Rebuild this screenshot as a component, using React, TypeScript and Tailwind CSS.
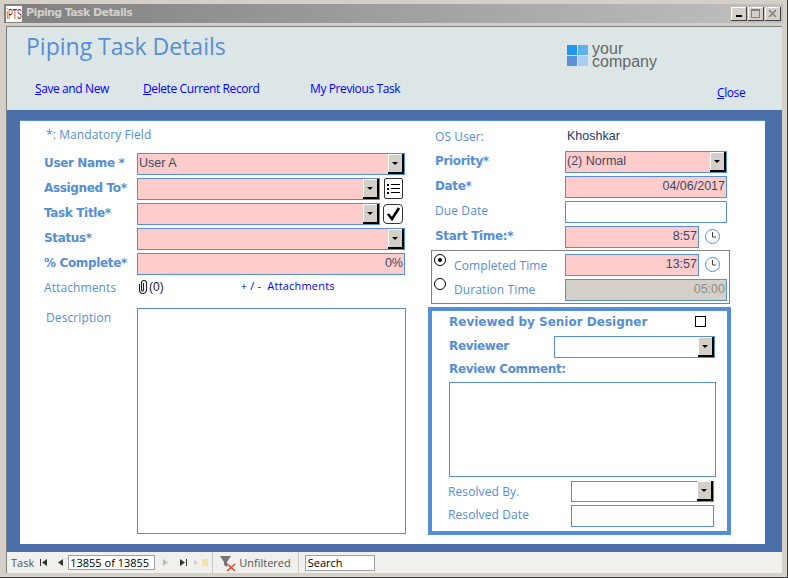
import React from 'react';

const bodyFont = { fontFamily: '"Open Sans", sans-serif' };

const ComboButton = () => (
  <span className="flex h-[20px] w-[16px] shrink-0 items-center justify-center self-end border-b-2 border-r-2 border-black bg-[#d4d0c8] shadow-[inset_1px_1px_0_#fff]">
    <span className="mt-[1px] h-0 w-0 border-x-[3px] border-t-[3px] border-x-transparent border-t-black" />
  </span>
);

const Box = ({ w, h = 22, bg = 'bg-white', combo, align = 'left', text, muted }: { w: number | string; h?: number; bg?: string; combo?: boolean; align?: string; text?: string; muted?: boolean }) => (
  <div
    className={`flex shrink-0 items-center justify-between border border-[#558ed5] ${bg}`}
    style={{ width: w, height: h }}
  >
    <span
      className={`flex-1 px-[1px] font-['Liberation_Sans',sans-serif] text-[12.5px] leading-none ${muted ? 'text-[#8c8c8c]' : 'text-[#3a4a63]'} ${align === 'right' ? 'text-right' : 'text-left'}`}
    >
      {text}
    </span>
    {combo && <ComboButton />}
  </div>
);

const Label = ({ children, bold, className = '' }: { children: React.ReactNode; bold?: boolean; className?: string }) => (
  <span className={`whitespace-nowrap text-[12px] leading-none text-[#558ed5] ${bold ? "font-['DejaVu_Sans',sans-serif] font-bold tracking-[-0.35px]" : "font-['Open_Sans',sans-serif] tracking-[0.1px]"} ${className}`}>
    {children}
  </span>
);

const Clock = () => (
  <svg width="17" height="17" viewBox="0 0 17 17" fill="none" stroke="#558ed5" className="ml-[5px] shrink-0">
    <circle cx="8.5" cy="8.5" r="7" />
    <path d="M8.5 4v5h3.5" stroke="#444" />
  </svg>
);

const Radio = ({ on, lift }: { on?: boolean; lift: string }) => (
  <span className={`${lift} flex h-[12px] w-[12px] shrink-0 items-center justify-center rounded-full border border-black bg-white`}>
    {on && <span className="h-[4px] w-[4px] rounded-full bg-black" />}
  </span>
);

const Row = ({ label, children }: { label: string; children: React.ReactNode }) => (
  <div className="flex h-[25px] items-center">
    <div className="w-[93px] pb-[6px] leading-none">
      <Label bold>{label}</Label>
    </div>
    {children}
  </div>
);

const RightRow = ({ label, bold, children }: { label: string; bold?: boolean; children: React.ReactNode }) => (
  <div className="flex h-[25px] items-center">
    <div className="w-[130px] pb-[6px] leading-none">
      <Label bold={bold}>{label}</Label>
    </div>
    {children}
  </div>
);

const NavArrow = ({ d, fill = '#333' }: { d: string; fill?: string }) => (
  <svg width="9" height="9" viewBox="0 0 9 9" className="block shrink-0">
    <path d={d} fill={fill} />
  </svg>
);

export default function App() {
  return (
    <div className="flex h-[578px] w-[788px] flex-col overflow-hidden border-b border-r border-[#404040] bg-[#d4d0c8] pt-[4px]" style={bodyFont}>
      {/* Title bar */}
      <div className="mx-[4px] flex h-[19px] shrink-0 items-center justify-between bg-gradient-to-r from-[#808080] to-[#c0c0c0] pl-[2px] pr-[2px]">
        <div className="flex items-center gap-[4px]">
          <div className="flex h-[16px] w-[16px] items-center justify-center overflow-hidden bg-white">
            <span className="scale-x-[0.5] whitespace-nowrap font-['Liberation_Sans',sans-serif] text-[14px] font-normal leading-none text-[#8b1a1a]">
              <span className="text-[#1d4fa8]">i</span>PTS
            </span>
          </div>
          <span className="font-['DejaVu_Sans',sans-serif] text-[11px] font-bold tracking-[-0.6px] text-[#d4d0c8]">Piping Task Details</span>
        </div>
        <div className="flex">
          {['min', 'max', 'close'].map((b) => (
            <span key={b} className="ml-[1px] flex h-[14px] w-[16px] items-center justify-center border-b border-r border-[#404040] bg-[#d4d0c8] shadow-[inset_1px_1px_0_#fff]">
              {b === 'min' && <span className="mt-[6px] h-[2px] w-[6px] bg-black" />}
              {b === 'max' && <span className="h-[9px] w-[9px] border border-t-2 border-[#808080]" />}
              {b === 'close' && (
                <svg width="9" height="9" viewBox="0 0 9 9" stroke="#808080" strokeWidth="1.6"><path d="M1 1l7 7M8 1l-7 7" /></svg>
              )}
            </span>
          ))}
        </div>
      </div>

      {/* Form frame */}
      <div className="mb-[4px] ml-[6px] mr-[5px] mt-[3px] flex min-h-0 flex-1 flex-col border-l border-t border-[#808080]">
        {/* Form header */}
        <div className="flex h-[85px] shrink-0 flex-col border-b-2 border-[#4a6fa9] bg-[#dde6e6]">
          <div className="flex h-[48px] shrink-0 items-start justify-between">
            <span className="ml-[19px] mt-[3px] text-[23px] leading-[33px] text-[#558ed5]">Piping Task Details</span>
            <div className="mr-[125px] mt-[15px] flex items-center gap-[4px]">
              <div className="grid h-[21px] w-[21px] grid-cols-2 gap-[1px]">
                <span className="bg-[#1e96f0]" />
                <span className="bg-[#5fb0f0]" />
                <span className="bg-[#5a8fdc]" />
                <span className="bg-[#a8cdf0]" />
              </div>
              <div className="font-['Liberation_Sans',sans-serif] text-[16px] font-normal leading-[13px] text-[#666]">
                your<br />company
              </div>
            </div>
          </div>
          <div className="mt-[8px] flex items-start text-[12px] leading-none tracking-[-0.4px] text-[#0000ff]">
            <span className="ml-[28px] w-[108px]"><u>S</u>ave and New</span>
            <span className="w-[167px]"><u>D</u>elete Current Record</span>
            <span className="w-[407px]">My Previous Task</span>
            <span className="mt-[4px]"><u>C</u>lose</span>
          </div>
        </div>

        {/* Detail section */}
        <div className="flex min-h-0 flex-1 bg-[#4a6fa9] pb-[8px] pl-[13px] pr-[17px] pt-[8px]">
          <div className="flex flex-1 border-t border-[#558ed5] bg-white">
            {/* Left column */}
            <div className="w-[408px] shrink-0 pl-[24px] pt-[8px]">
              <Label className="ml-[2px] block leading-[14px]">*: Mandatory Field</Label>
              <div className="mt-[10px]">
                <Row label="User Name *"><Box w={268} text="User A" combo bg="bg-[#ffcccc]" /></Row>
                <Row label="Assigned To*">
                  <Box w={243} combo bg="bg-[#ffcccc]" />
                  <span className="ml-[4px] flex h-[21px] w-[19px] flex-col items-center justify-center gap-[2px] rounded-[2px] border border-[#333]">
                    {[0, 1, 2].map((i) => (
                      <span key={i} className="flex items-center gap-[2px]">
                        <span className="h-[2px] w-[2px] bg-black" />
                        <span className="h-[1px] w-[9px] bg-black" />
                      </span>
                    ))}
                  </span>
                </Row>
                <Row label="Task Title*">
                  <Box w={243} combo bg="bg-[#ffcccc]" />
                  <span className="ml-[3px] flex h-[20px] w-[20px] items-center justify-center rounded-[4px] border border-[#333]">
                    <svg width="15" height="15" viewBox="0 0 15 15" fill="none" stroke="#000" strokeWidth="2.6"><path d="M2 8l4 5 7-11" /></svg>
                  </span>
                </Row>
                <Row label="Status*"><Box w={268} combo bg="bg-[#ffcccc]" /></Row>
                <Row label="% Complete*"><Box w={268} text="0%" align="right" bg="bg-[#ffcccc]" /></Row>
                <div className="flex h-[25px] items-center pb-[4px]">
                  <div className="w-[93px] pb-[2px] leading-none"><Label>Attachments</Label></div>
                  <svg width="12" height="15" viewBox="0 0 11 15" fill="none" stroke="#222" strokeWidth="1.1" className="shrink-0">
                    <path d="M2 5v6a3.5 3.5 0 0 0 7 0V4a2.5 2.5 0 0 0-5 0v7a1 1 0 0 0 2 0V4" />
                  </svg>
                  <span className="font-['Liberation_Sans',sans-serif] text-[12px] text-[#222]">(0)</span>
                  <span className="ml-[77px] text-[11px] tracking-[0.2px] text-[#0000ff]">+ / -&nbsp; Attachments</span>
                </div>
              </div>
              <div className="mt-[7px] flex">
                <div className="w-[93px] pl-[2px] leading-none"><Label>Description</Label></div>
                <div className="h-[226px] w-[269px] border border-[#558ed5]" />
              </div>
            </div>

            {/* Right column */}
            <div className="w-[303px] shrink-0 pl-[7px] pt-[3px]">
              <div className="flex h-[25px] items-center">
                <div className="w-[130px] pb-[4px] leading-none"><Label>OS User:</Label></div>
                <span className="ml-[2px] font-['Liberation_Sans',sans-serif] text-[12.5px] text-[#1f3864]">Khoshkar</span>
              </div>
              <RightRow label="Priority*" bold><Box w={162} text="(2) Normal" combo bg="bg-[#ffcccc]" /></RightRow>
              <RightRow label="Date*" bold><Box w={162} text="04/06/2017" align="right" bg="bg-[#ffcccc]" /></RightRow>
              <RightRow label="Due Date"><Box w={162} /></RightRow>
              <RightRow label="Start Time:*" bold>
                <Box w={134} text="8:57" align="right" bg="bg-[#ffcccc]" />
                <Clock />
              </RightRow>
              <div className="-ml-[4px] mt-[1px] h-[54px] w-[299px] border border-[#808080] pl-[2px] pt-[1px]">
                <div className="flex h-[25px] items-center">
                  <Radio on lift="mb-[10px]" />
                  <div className="ml-[8px] w-[111px] pb-[2px] leading-none"><Label>Completed Time</Label></div>
                  <Box w={134} text="13:57" align="right" bg="bg-[#ffcccc]" />
                  <Clock />
                </div>
                <div className="flex h-[25px] items-center">
                  <Radio lift="mb-[12px]" />
                  <div className="ml-[8px] w-[111px] pb-[4px] leading-none"><Label>Duration Time</Label></div>
                  <Box w={162} text="05:00" align="right" muted bg="bg-[#d4d0c8]" />
                </div>
              </div>

              {/* Review panel */}
              <div className="-ml-[7px] mt-[3px] h-[228px] w-[303px] border-4 border-[#558ed5] pl-[17px]">
                <div className="mb-[4px] flex h-[21px] items-center justify-between pr-[21px]">
                  <Label bold className="tracking-[0px]">Reviewed by Senior Designer</Label>
                  <span className="h-[11px] w-[11px] border border-black" />
                </div>
                <div className="flex h-[22px] items-center">
                  <div className="w-[105px] pb-[6px] leading-none"><Label bold>Reviewer</Label></div>
                  <Box w={161} combo />
                </div>
                <div className="flex h-[24px] items-center pb-[2px]"><Label bold>Review Comment:</Label></div>
                <div className="h-[95px] w-[267px] border border-[#558ed5]" />
                <div className="mt-[4px] flex h-[21px] items-center">
                  <div className="w-[122px] pb-[4px] leading-none"><Label className="-ml-[1px]">Resolved By.</Label></div>
                  <Box w={143} h={21} combo />
                </div>
                <div className="mt-[3px] flex h-[22px] items-center">
                  <div className="w-[122px] pb-[6px] leading-none"><Label className="-ml-[1px]">Resolved Date</Label></div>
                  <Box w={143} />
                </div>
              </div>
            </div>
          </div>
        </div>

        {/* Record navigation bar */}
        <div className="flex h-[21px] shrink-0 items-center bg-[#f0f0ec] text-[11px] leading-none">
          <span className="ml-[4px] text-[#555]">Task</span>
          <span className="ml-[5px]"><NavArrow d="M1 1h1v7H1zM8 1v7L3 4.5z" /></span>
          <span className="ml-[8px]"><NavArrow d="M7 1v7L2 4.5z" /></span>
          <span className="ml-[3px] flex h-[15px] w-[87px] items-center border border-[#a0a0a0] bg-white pl-[1px] text-[11px] text-black">13855 of 13855</span>
          <span className="ml-[6px]"><NavArrow d="M2 1v7l5-3.5z" fill="#bbb" /></span>
          <span className="ml-[9px]"><NavArrow d="M1 1v7l5-3.5zM7 1h1v7H7z" /></span>
          <span className="ml-[5px]"><NavArrow d="M1 2v5l4-2.5z" fill="#ccc" /></span>
          <span className="h-[7px] w-[6px] bg-[#f0e3a8]" />
          <span className="ml-[4px] h-full w-px bg-[#c8c8c8]" />
          <svg width="18" height="18" viewBox="0 0 18 18" className="ml-[6px] shrink-0">
            <path d="M1 2h11L8 8v5L5 11V8z" fill="#777" />
            <path d="M8 10l8 7M16 10l-8 7" stroke="#d9482b" strokeWidth="1.6" />
          </svg>
          <span className="ml-[2px] text-[#555]">Unfiltered</span>
          <span className="ml-[7px] h-full w-px bg-[#c8c8c8]" />
          <span className="ml-[6px] flex h-[16px] w-[70px] items-center border border-[#a0a0a0] bg-white pl-[2px] text-black">Search</span>
        </div>
      </div>
    </div>
  );
}
